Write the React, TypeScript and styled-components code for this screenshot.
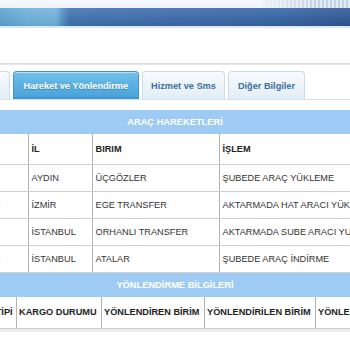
import styled, { createGlobalStyle } from "styled-components";

const GlobalStyle = createGlobalStyle`
  html, body { margin: 0; padding: 0; background: #fff; }
  body { font-family: "Liberation Sans", Arial, sans-serif; }
`;

const movements = [
  { time: "12.05.2014 09:41", city: "AYDIN", unit: "ÜÇGÖZLER", op: "ŞUBEDE ARAÇ YÜKLEME" },
  { time: "12.05.2014 22:10", city: "İZMİR", unit: "EGE TRANSFER", op: "AKTARMADA HAT ARACI YÜKLEME" },
  { time: "13.05.2014 07:30", city: "İSTANBUL", unit: "ORHANLI TRANSFER", op: "AKTARMADA SUBE ARACI YUKLEME" },
  { time: "13.05.2014 09:50", city: "İSTANBUL", unit: "ATALAR", op: "ŞUBEDE ARAÇ İNDİRME" },
];

const routingHeads = ["KARGO TİPİ", "KARGO DURUMU", "YÖNLENDİREN BİRİM", "YÖNLENDİRİLEN BİRİM", "YÖNLENDİRME TARİHİ"];

const tabs = [
  { label: "Gönderi Bilgileri", active: false, clipped: true },
  { label: "Hareket ve Yönlendirme", active: true },
  { label: "Hizmet ve Sms", active: false },
  { label: "Diğer Bilgiler", active: false },
];

export default function App() {
  return (
    <Page>
      <GlobalStyle />
      <Header>
        <HeaderTop>
          <Stripes />
        </HeaderTop>
        <HeaderBand />
        <HeaderLine />
      </Header>

      <Rule />

      <TabBar>
        {tabs.map((t) => (
          <Tab key={t.label} active={t.active} clipped={t.clipped}>
            {t.label}
          </Tab>
        ))}
      </TabBar>

      <Section>
        <SectionBar>ARAÇ HAREKETLERİ</SectionBar>
        <Table shift={75}>
          <colgroup>
            <Col w={103} />
            <Col w={64} />
            <Col w={127} />
            <Col w={200} />
            <Col w={140} />
          </colgroup>
          <thead>
            <HeadRow h={30}>
              <HeadCell>TARİH</HeadCell>
              <HeadCell>İL</HeadCell>
              <HeadCell>BIRIM</HeadCell>
              <HeadCell>İŞLEM</HeadCell>
              <HeadCell>ARAÇ</HeadCell>
            </HeadRow>
          </thead>
          <tbody>
            {movements.map((m, i) => (
              <Row key={i}>
                <Cell>{m.time}</Cell>
                <Cell>{m.city}</Cell>
                <Cell>{m.unit}</Cell>
                <Cell>{m.op}</Cell>
                <Cell>34 ABC 12</Cell>
              </Row>
            ))}
          </tbody>
        </Table>

        <SectionBar>YÖNLENDİRME BİLGİLERİ</SectionBar>
        <Table shift={44}>
          <colgroup>
            <Col w={60} />
            <Col w={85} />
            <Col w={103} />
            <Col w={111} />
            <Col w={140} />
          </colgroup>
          <thead>
            <HeadRow h={32}>
              {routingHeads.map((h) => (
                <HeadCell key={h} tight>
                  {h}
                </HeadCell>
              ))}
            </HeadRow>
          </thead>
        </Table>
        <Track />
      </Section>
    </Page>
  );
}

const Page = styled.div`
  width: 350px;
  height: 350px;
  overflow: hidden;
  background: #fff;
`;

const Header = styled.div`
  display: flex;
  flex-direction: column;
`;

const HeaderTop = styled.div`
  height: 8px;
  display: flex;
  justify-content: flex-end;
  background: linear-gradient(180deg, #f7f9fc, #eef3f8);
`;

const Stripes = styled.div`
  width: 88px;
  background:
    linear-gradient(90deg, #eef3f8 0%, rgba(238, 243, 248, 0) 60%),
    repeating-linear-gradient(90deg, #c3d3e8 0 2px, #e2ebf5 2px 4px);
`;

const HeaderBand = styled.div`
  height: 18px;
  background:
    linear-gradient(180deg, rgba(255, 255, 255, 0.12), rgba(0, 0, 0, 0.06)),
    linear-gradient(
      90deg,
      #5aa2cf 0%,
      #6db1db 8%,
      #70b3dc 16%,
      #4f8cc4 18%,
      #3e71af 20%,
      #3869aa 55%,
      #3363a3 80%,
      #2b5795 100%
    );
`;

const HeaderLine = styled.div`
  height: 2px;
  background: #dde8f2;
`;

const Rule = styled.div`
  margin-top: 35px;
  height: 2px;
  background: linear-gradient(180deg, #d4d4d4, #ececec);
`;

const TabBar = styled.div`
  margin-top: 6px;
  margin-left: -90px;
  display: flex;
  gap: 3px;
  align-items: flex-end;
  border-bottom: 1px solid #d3e2ed;
`;

const Tab = styled.div<{ active?: boolean; clipped?: boolean }>`
  height: 28px;
  box-sizing: border-box;
  padding: 0 ${(p) => (p.active || p.clipped ? "9.5px" : "8.5px")};
  display: flex;
  align-items: center;
  justify-content: ${(p) => (p.clipped ? "flex-end" : "center")};
  width: ${(p) => (p.clipped ? "100px" : "auto")};
  white-space: nowrap;
  font-size: 9.2px;
  font-weight: bold;
  border: 1px solid ${(p) => (p.active ? "#3f93cc" : "#cadcea")};
  border-bottom: none;
  border-radius: 4px 4px 0 0;
  color: ${(p) => (p.active ? "#fff" : "#3f6f9f")};
  text-shadow: ${(p) => (p.active ? "0 1px 0 rgba(20, 80, 130, 0.45)" : "none")};
  background: ${(p) =>
    p.active
      ? "linear-gradient(180deg, #74c1ea 0%, #5cb1e3 45%, #4ea6dd 85%, #3f98d3 100%)"
      : "linear-gradient(180deg, #f6fafd 0%, #ebf3f9 60%, #e2edf6 100%)"};
  box-shadow: inset 0 1px 0 rgba(255, 255, 255, 0.5);
`;

const Section = styled.div`
  margin-top: 10px;
  display: flex;
  flex-direction: column;
`;

const SectionBar = styled.div`
  height: 24px;
  display: flex;
  align-items: center;
  justify-content: center;
  background: #9ecbf3;
  color: #fff;
  font-size: 9.3px;
  font-weight: bold;
  white-space: nowrap;
`;

const Table = styled.table<{ shift: number }>`
  margin-left: -${(p) => p.shift}px;
  border-collapse: collapse;
  table-layout: fixed;
  width: max-content;
  font-size: 9.2px;
`;

const Col = styled.col<{ w: number }>`
  width: ${(p) => p.w}px;
`;

const HeadRow = styled.tr<{ h: number }>`
  height: ${(p) => p.h}px;
`;

const Row = styled.tr`
  height: 27px;
`;

const HeadCell = styled.th<{ tight?: boolean }>`
  padding: 0 ${(p) => (p.tight ? "2px" : "2.5px")};
  text-align: left;
  font-weight: bold;
  color: #1e1e1e;
  white-space: nowrap;
  overflow: hidden;
  border-left: 1px solid #b4b4b4;
  border-right: 1px solid #b4b4b4;
  border-bottom: 1px solid #cfcfcf;
`;

const Cell = styled.td`
  padding: 0 2.5px;
  color: #333;
  white-space: nowrap;
  overflow: hidden;
  border-left: 1px solid #b4b4b4;
  border-right: 1px solid #b4b4b4;
  border-bottom: 1px solid #cfcfcf;
`;

const Track = styled.div`
  height: 3px;
  background: #ececec;
`;
